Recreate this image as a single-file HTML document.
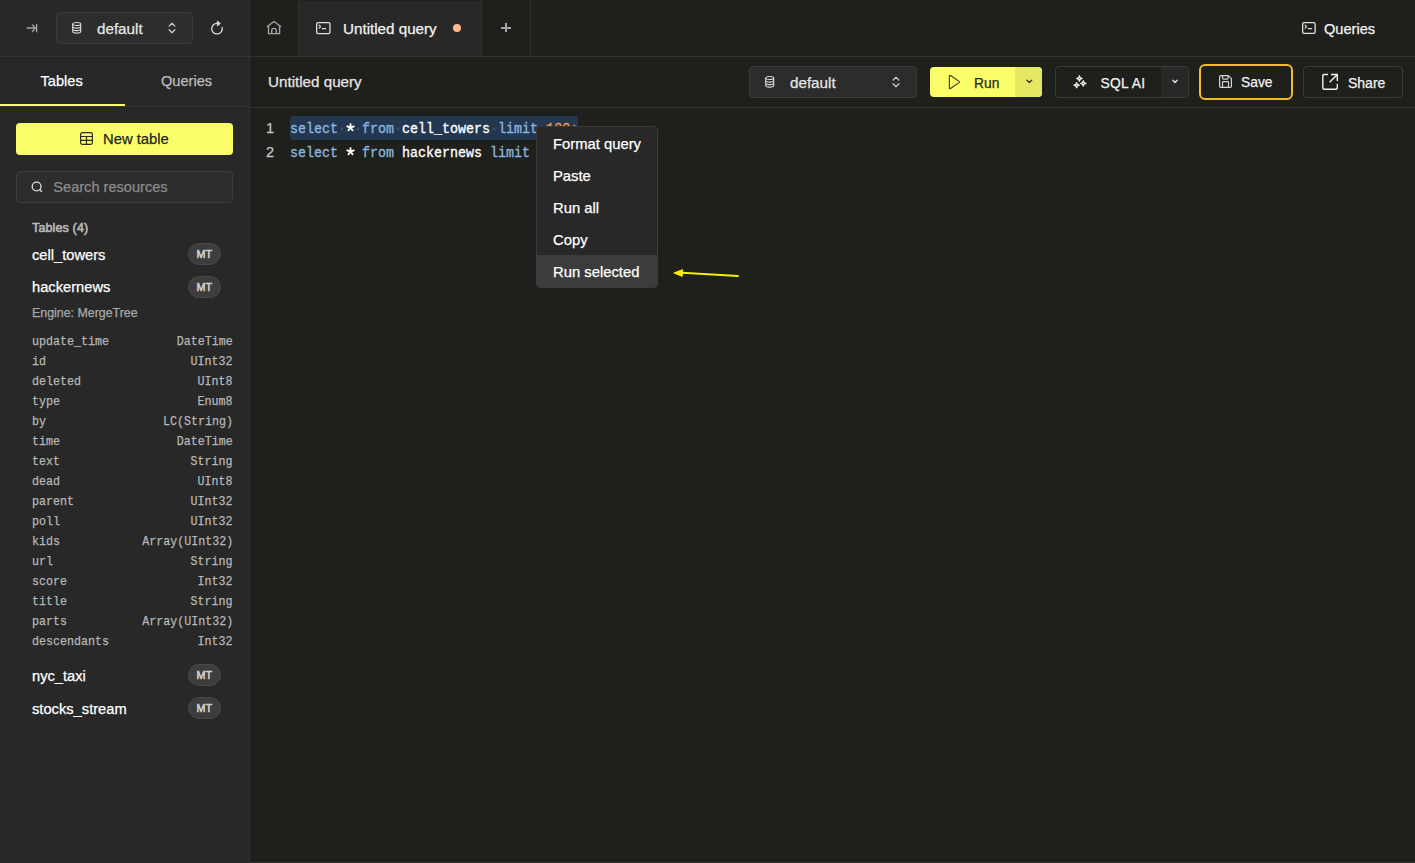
<!DOCTYPE html>
<html><head><meta charset="utf-8">
<style>
*{box-sizing:border-box;margin:0;padding:0}
html,body{width:1415px;height:863px;overflow:hidden;background:#1f1f1c;font-family:"Liberation Sans",sans-serif;color:#fff}
.a{position:absolute}
.t{position:absolute;line-height:1;white-space:nowrap;-webkit-text-stroke:0.25px currentColor}
.m{font-family:"Liberation Mono",monospace}
svg{position:absolute;overflow:visible}
</style></head><body>

<!-- sidebar -->
<div class="a" style="left:0;top:0;width:249px;height:863px;background:#282828"></div>
<div class="a" style="left:249px;top:0;width:1px;height:863px;background:#323232"></div>
<div class="a" style="left:0;top:56px;width:1415px;height:1px;background:#323232"></div>
<div class="a" style="left:0;top:106px;width:249px;height:1px;background:#323232"></div>
<div class="a" style="left:250px;top:107px;width:1165px;height:1px;background:#323232"></div>
<div class="a" style="left:250px;top:862px;width:1165px;height:1px;background:#353535"></div>
<div class="a" style="left:0;top:104px;width:125px;height:2px;background:#faff69"></div>

<!-- top-left controls -->
<svg style="left:22px;top:18px" width="20" height="20" viewBox="0 0 20 20"><path d="M5.2 10h7.6M10.4 6.9L13.3 10 10.4 13.6" stroke="#a4a6aa" stroke-width="1.35" fill="none" stroke-linecap="round" stroke-linejoin="round"/><path d="M14.6 6.4v7.4" stroke="#a4a6aa" stroke-width="1.35" fill="none" stroke-linecap="round"/></svg>
<div class="a" style="left:56px;top:12px;width:137px;height:32px;border:1px solid #3a3a3a;border-radius:4px;background:#2d2d2d"></div>
<svg style="left:72.3px;top:21.6px" width="10" height="12" viewBox="0 0 10 12"><ellipse cx="4.7" cy="2" rx="4" ry="1.45" stroke="#ddd" stroke-width="1.1" fill="none"/><path d="M0.7 2v7.6c0 .8 1.8 1.5 4 1.5s4-.7 4-1.5V2M0.7 4.6c0 .8 1.8 1.5 4 1.5s4-.7 4-1.5M0.7 7.1c0 .8 1.8 1.5 4 1.5s4-.7 4-1.5" stroke="#ddd" stroke-width="1.1" fill="none"/></svg>
<div class="t" style="left:97px;top:21.3px;font-size:15.2px;color:#e6e6e6">default</div>
<svg style="left:168px;top:22px" width="8" height="12" viewBox="0 0 8 12"><path d="M1.1 4.1L4 1.3 6.9 4.1M1.1 7.8L4 10.7 6.9 7.8" stroke="#d0d0d0" stroke-width="1.25" fill="none" stroke-linecap="round" stroke-linejoin="round"/></svg>
<svg style="left:0;top:0" width="250" height="56"><path d="M222.1 27.3A5.3 5.3 0 1 1 217.6 23.4" stroke="#ddd" stroke-width="1.3" fill="none" stroke-linecap="round"/><path d="M217.3 21L220.4 23.6 217.3 26z" fill="#ddd" stroke="#ddd" stroke-width="0.8" stroke-linejoin="round"/></svg>

<!-- tabs -->
<div class="a" style="left:298px;top:0;width:1px;height:56px;background:#323232"></div>
<div class="a" style="left:299px;top:1px;width:182px;height:55px;background:#282828"></div>
<div class="a" style="left:481px;top:0;width:1px;height:56px;background:#323232"></div>
<div class="a" style="left:530px;top:0;width:1px;height:56px;background:#323232"></div>
<svg style="left:262px;top:16px" width="24" height="24" viewBox="0 0 24 24"><path d="M5.4 10.6L12 5.6 18.6 10.6" stroke="#a4a6aa" stroke-width="1.3" fill="none" stroke-linecap="round" stroke-linejoin="round"/><path d="M6.5 9.8V17.6H17.6V9.8" stroke="#a4a6aa" stroke-width="1.3" fill="none" stroke-linejoin="round"/><path d="M9.7 17.6V14.6a2.3 2.3 0 0 1 4.6 0V17.6" stroke="#a4a6aa" stroke-width="1.3" fill="none"/></svg>
<svg style="left:315.8px;top:22px" width="15" height="12" viewBox="0 0 15 12"><rect x="0.65" y="0.65" width="13.3" height="10.9" rx="1.4" stroke="#e0e0e0" stroke-width="1.3" fill="none"/><path d="M3.1 3.1l1.5 1.5-1.5 1.5M6.3 6.6h3.4" stroke="#e0e0e0" stroke-width="1.2" fill="none" stroke-linecap="round" stroke-linejoin="round"/></svg>
<div class="t" style="left:343px;top:21.4px;font-size:15.2px;color:#f2f2f2">Untitled query</div>
<div class="a" style="left:452.8px;top:23.7px;width:8.4px;height:8.4px;border-radius:50%;background:#ffb88c"></div>
<div class="a" style="left:505.1px;top:22.8px;width:1.5px;height:9.4px;background:#a4a6aa"></div><div class="a" style="left:501.1px;top:27.1px;width:9.6px;height:1.5px;background:#a4a6aa"></div>

<!-- top right Queries -->
<svg style="left:1302px;top:22px" width="15" height="12" viewBox="0 0 15 12"><rect x="0.65" y="0.65" width="12.5" height="10.7" rx="1.4" stroke="#e0e0e0" stroke-width="1.3" fill="none"/><path d="M3.1 3.1l1.5 1.5-1.5 1.5M6.3 6.6h3.4" stroke="#e0e0e0" stroke-width="1.2" fill="none" stroke-linecap="round" stroke-linejoin="round"/></svg>
<div class="t" style="left:1324px;top:22px;font-size:14.6px;color:#f2f2f2">Queries</div>

<!-- sidebar tabs -->
<div class="t" style="left:40.5px;top:73.8px;font-size:14.6px;color:#fff">Tables</div>
<div class="t" style="left:161px;top:73.8px;font-size:14.6px;color:#bdbdbd">Queries</div>

<!-- new table -->
<div class="a" style="left:16px;top:123px;width:217px;height:32px;border-radius:4px;background:#faff69"></div>
<svg style="left:80px;top:132px" width="13" height="13" viewBox="0 0 13 13"><rect x="0.6" y="0.6" width="11.8" height="11.8" rx="1.8" stroke="#2a2a1a" stroke-width="1.2" fill="none"/><path d="M0.6 4.5h11.8M0.6 8.4h11.8M6.5 4.5v7.9" stroke="#2a2a1a" stroke-width="1.2"/></svg>
<div class="t" style="left:103px;top:131.8px;font-size:14.8px;color:#1f1f1c">New table</div>

<!-- search -->
<div class="a" style="left:16px;top:171px;width:217px;height:32px;border:1px solid #3d3d3d;border-radius:4px;background:#2d2d2d"></div>
<svg style="left:31px;top:181px" width="12" height="12" viewBox="0 0 12 12"><circle cx="5.6" cy="5.5" r="4.4" stroke="#dcdcdc" stroke-width="1.35" fill="none"/><path d="M8.9 8.8l1.7 1.7" stroke="#dcdcdc" stroke-width="1.35" stroke-linecap="round"/></svg>
<div class="t" style="left:53.3px;top:180px;font-size:14.6px;color:#8c8c8c">Search resources</div>

<!-- table list -->
<div class="t" style="left:32px;top:222.2px;font-size:12.6px;color:#b8b8b8;-webkit-text-stroke:0.6px currentColor;letter-spacing:0.1px">Tables (4)</div>
<div class="t" style="left:32px;top:247.5px;font-size:14.7px;color:#fff">cell_towers</div>
<div class="a" style="left:188px;top:243px;width:33px;height:22px;border-radius:11px;background:#3d3d3d;border:1px solid #484848"></div>
<div class="t" style="left:196.4px;top:249.3px;font-size:10.8px;color:#d0d0d0;-webkit-text-stroke:0.55px currentColor;letter-spacing:0.2px">MT</div>
<div class="t" style="left:32px;top:280.2px;font-size:14.7px;color:#fff">hackernews</div>
<div class="a" style="left:188px;top:276px;width:33px;height:22px;border-radius:11px;background:#3d3d3d;border:1px solid #484848"></div>
<div class="t" style="left:196.4px;top:282.3px;font-size:10.8px;color:#d0d0d0;-webkit-text-stroke:0.55px currentColor;letter-spacing:0.2px">MT</div>
<div class="t" style="left:32px;top:306.6px;font-size:12.4px;color:#a8a8a8">Engine: MergeTree</div>

<div class="t m" style="left:32px;top:334.86px;font-size:13.5px;color:#b8b8b8;transform:scaleX(0.8642);transform-origin:0 0">update_time</div>
<div class="t m" style="right:1182px;top:334.86px;font-size:13.5px;color:#b8b8b8;transform:scaleX(0.8642);transform-origin:100% 0">DateTime</div>
<div class="t m" style="left:32px;top:354.86px;font-size:13.5px;color:#b8b8b8;transform:scaleX(0.8642);transform-origin:0 0">id</div>
<div class="t m" style="right:1182px;top:354.86px;font-size:13.5px;color:#b8b8b8;transform:scaleX(0.8642);transform-origin:100% 0">UInt32</div>
<div class="t m" style="left:32px;top:374.86px;font-size:13.5px;color:#b8b8b8;transform:scaleX(0.8642);transform-origin:0 0">deleted</div>
<div class="t m" style="right:1182px;top:374.86px;font-size:13.5px;color:#b8b8b8;transform:scaleX(0.8642);transform-origin:100% 0">UInt8</div>
<div class="t m" style="left:32px;top:394.86px;font-size:13.5px;color:#b8b8b8;transform:scaleX(0.8642);transform-origin:0 0">type</div>
<div class="t m" style="right:1182px;top:394.86px;font-size:13.5px;color:#b8b8b8;transform:scaleX(0.8642);transform-origin:100% 0">Enum8</div>
<div class="t m" style="left:32px;top:414.86px;font-size:13.5px;color:#b8b8b8;transform:scaleX(0.8642);transform-origin:0 0">by</div>
<div class="t m" style="right:1182px;top:414.86px;font-size:13.5px;color:#b8b8b8;transform:scaleX(0.8642);transform-origin:100% 0">LC(String)</div>
<div class="t m" style="left:32px;top:434.86px;font-size:13.5px;color:#b8b8b8;transform:scaleX(0.8642);transform-origin:0 0">time</div>
<div class="t m" style="right:1182px;top:434.86px;font-size:13.5px;color:#b8b8b8;transform:scaleX(0.8642);transform-origin:100% 0">DateTime</div>
<div class="t m" style="left:32px;top:454.86px;font-size:13.5px;color:#b8b8b8;transform:scaleX(0.8642);transform-origin:0 0">text</div>
<div class="t m" style="right:1182px;top:454.86px;font-size:13.5px;color:#b8b8b8;transform:scaleX(0.8642);transform-origin:100% 0">String</div>
<div class="t m" style="left:32px;top:474.86px;font-size:13.5px;color:#b8b8b8;transform:scaleX(0.8642);transform-origin:0 0">dead</div>
<div class="t m" style="right:1182px;top:474.86px;font-size:13.5px;color:#b8b8b8;transform:scaleX(0.8642);transform-origin:100% 0">UInt8</div>
<div class="t m" style="left:32px;top:494.86px;font-size:13.5px;color:#b8b8b8;transform:scaleX(0.8642);transform-origin:0 0">parent</div>
<div class="t m" style="right:1182px;top:494.86px;font-size:13.5px;color:#b8b8b8;transform:scaleX(0.8642);transform-origin:100% 0">UInt32</div>
<div class="t m" style="left:32px;top:514.86px;font-size:13.5px;color:#b8b8b8;transform:scaleX(0.8642);transform-origin:0 0">poll</div>
<div class="t m" style="right:1182px;top:514.86px;font-size:13.5px;color:#b8b8b8;transform:scaleX(0.8642);transform-origin:100% 0">UInt32</div>
<div class="t m" style="left:32px;top:534.86px;font-size:13.5px;color:#b8b8b8;transform:scaleX(0.8642);transform-origin:0 0">kids</div>
<div class="t m" style="right:1182px;top:534.86px;font-size:13.5px;color:#b8b8b8;transform:scaleX(0.8642);transform-origin:100% 0">Array(UInt32)</div>
<div class="t m" style="left:32px;top:554.86px;font-size:13.5px;color:#b8b8b8;transform:scaleX(0.8642);transform-origin:0 0">url</div>
<div class="t m" style="right:1182px;top:554.86px;font-size:13.5px;color:#b8b8b8;transform:scaleX(0.8642);transform-origin:100% 0">String</div>
<div class="t m" style="left:32px;top:574.86px;font-size:13.5px;color:#b8b8b8;transform:scaleX(0.8642);transform-origin:0 0">score</div>
<div class="t m" style="right:1182px;top:574.86px;font-size:13.5px;color:#b8b8b8;transform:scaleX(0.8642);transform-origin:100% 0">Int32</div>
<div class="t m" style="left:32px;top:594.86px;font-size:13.5px;color:#b8b8b8;transform:scaleX(0.8642);transform-origin:0 0">title</div>
<div class="t m" style="right:1182px;top:594.86px;font-size:13.5px;color:#b8b8b8;transform:scaleX(0.8642);transform-origin:100% 0">String</div>
<div class="t m" style="left:32px;top:614.86px;font-size:13.5px;color:#b8b8b8;transform:scaleX(0.8642);transform-origin:0 0">parts</div>
<div class="t m" style="right:1182px;top:614.86px;font-size:13.5px;color:#b8b8b8;transform:scaleX(0.8642);transform-origin:100% 0">Array(UInt32)</div>
<div class="t m" style="left:32px;top:634.86px;font-size:13.5px;color:#b8b8b8;transform:scaleX(0.8642);transform-origin:0 0">descendants</div>
<div class="t m" style="right:1182px;top:634.86px;font-size:13.5px;color:#b8b8b8;transform:scaleX(0.8642);transform-origin:100% 0">Int32</div>

<div class="t" style="left:32px;top:668.5px;font-size:14.7px;color:#fff">nyc_taxi</div>
<div class="a" style="left:188px;top:664px;width:33px;height:22px;border-radius:11px;background:#3d3d3d;border:1px solid #484848"></div>
<div class="t" style="left:196.4px;top:670.3px;font-size:10.8px;color:#d0d0d0;-webkit-text-stroke:0.55px currentColor;letter-spacing:0.2px">MT</div>
<div class="t" style="left:32px;top:701.5px;font-size:14.7px;color:#fff">stocks_stream</div>
<div class="a" style="left:188px;top:697px;width:33px;height:22px;border-radius:11px;background:#3d3d3d;border:1px solid #484848"></div>
<div class="t" style="left:196.4px;top:703.3px;font-size:10.8px;color:#d0d0d0;-webkit-text-stroke:0.55px currentColor;letter-spacing:0.2px">MT</div>

<!-- editor header -->
<div class="t" style="left:268px;top:73.9px;font-size:15.2px;color:#e6e6e6">Untitled query</div>

<div class="a" style="left:749px;top:66px;width:168px;height:32px;border:1px solid #3a3a3a;border-radius:4px;background:#2c2c2c"></div>
<svg style="left:765px;top:75.8px" width="10" height="12" viewBox="0 0 10 12"><ellipse cx="4.7" cy="2" rx="4" ry="1.45" stroke="#ddd" stroke-width="1.1" fill="none"/><path d="M0.7 2v7.6c0 .8 1.8 1.5 4 1.5s4-.7 4-1.5V2M0.7 4.6c0 .8 1.8 1.5 4 1.5s4-.7 4-1.5M0.7 7.1c0 .8 1.8 1.5 4 1.5s4-.7 4-1.5" stroke="#ddd" stroke-width="1.1" fill="none"/></svg>
<div class="t" style="left:790px;top:75.1px;font-size:15.2px;color:#e6e6e6">default</div>
<svg style="left:892.2px;top:76px" width="8" height="12" viewBox="0 0 8 12"><path d="M1.1 4.1L4 1.3 6.9 4.1M1.1 7.8L4 10.7 6.9 7.8" stroke="#d0d0d0" stroke-width="1.25" fill="none" stroke-linecap="round" stroke-linejoin="round"/></svg>

<div class="a" style="left:930px;top:67px;width:112px;height:30px;border-radius:4px;background:#faff69;overflow:hidden"><div class="a" style="left:85px;top:0;width:27px;height:30px;background:#e5e862"></div></div>
<svg style="left:948px;top:74px" width="13" height="16" viewBox="0 0 13 16"><path d="M1.4 2.1v11.8c0 .6.6.9 1.1.6l8.6-5.9c.4-.3.4-.9 0-1.2L2.5 1.5c-.5-.3-1.1 0-1.1.6z" stroke="#34342a" stroke-width="1.1" fill="none" stroke-linejoin="round"/></svg>
<div class="t" style="left:974px;top:77px;font-size:13.8px;color:#2a2a22">Run</div>
<svg style="left:1025.6px;top:79.3px" width="7" height="5" viewBox="0 0 7 5"><path d="M0.9 1.3L3.3 3.6 5.7 1.3" stroke="#3a3a28" stroke-width="1.4" fill="none" stroke-linecap="round" stroke-linejoin="round"/></svg>

<div class="a" style="left:1055px;top:66px;width:134px;height:32px;border:1px solid #3c3c3c;border-radius:4px;overflow:hidden"><div class="a" style="left:105px;top:0;width:28px;height:30px;background:#282828"></div></div>
<svg style="left:0;top:0" width="1415" height="100"><path d="M1079.40 75.40Q1079.71 78.19 1082.50 78.50Q1079.71 78.81 1079.40 81.60Q1079.09 78.81 1076.30 78.50Q1079.09 78.19 1079.40 75.40zM1083.30 80.40Q1083.60 83.10 1086.30 83.40Q1083.60 83.70 1083.30 86.40Q1083.00 83.70 1080.30 83.40Q1083.00 83.10 1083.30 80.40zM1076.60 82.20Q1076.90 84.90 1079.60 85.20Q1076.90 85.50 1076.60 88.20Q1076.30 85.50 1073.60 85.20Q1076.30 84.90 1076.60 82.20z" fill="#f0f0f0" stroke="#f0f0f0" stroke-width="1" stroke-linejoin="round"/><circle cx="1079.4" cy="78.5" r="0.5" fill="#1f1f1c"/><circle cx="1083.3" cy="83.4" r="0.5" fill="#1f1f1c"/><circle cx="1076.6" cy="85.2" r="0.5" fill="#1f1f1c"/></svg>
<div class="t" style="left:1100.6px;top:77.1px;font-size:13.8px;color:#f2f2f2;letter-spacing:0.25px">SQL AI</div>
<svg style="left:1172px;top:79.3px" width="7" height="5" viewBox="0 0 7 5"><path d="M0.9 1.3L3 3.5 5.1 1.3" stroke="#e0e0e0" stroke-width="1.4" fill="none" stroke-linecap="round" stroke-linejoin="round"/></svg>

<div class="a" style="left:1199px;top:64px;width:94px;height:36px;border:2px solid #f5b82e;border-radius:6px"></div>
<svg style="left:1219.2px;top:75px" width="13" height="13" viewBox="0 0 13 13"><path d="M1.8 0.6h7.6l3 3v7.6c0 .66-.54 1.2-1.2 1.2H1.8c-.66 0-1.2-.54-1.2-1.2V1.8c0-.66.54-1.2 1.2-1.2z" stroke="#d4d4d4" stroke-width="1.2" fill="none" stroke-linejoin="round"/><path d="M3.6 0.8v2.3c0 .6.4 1 1 1h3.4c.6 0 1-.4 1-1V0.8M3.5 12.2V7.2c0-.3.2-.5.5-.5h5c.3 0 .5.2.5.5v5" stroke="#d4d4d4" stroke-width="1.2" fill="none"/></svg>
<div class="t" style="left:1241px;top:75.5px;font-size:13.8px;color:#f2f2f2">Save</div>

<div class="a" style="left:1303px;top:66px;width:100px;height:32px;border:1px solid #3c3c3c;border-radius:4px"></div>
<svg style="left:1321px;top:73px" width="18" height="18" viewBox="0 0 18 18"><path d="M7 1.5H2.9c-.6 0-1.1.5-1.1 1.1v12.5c0 .6.5 1.1 1.1 1.1h12.3c.6 0 1.1-.5 1.1-1.1V10.9" stroke="#f0f0f0" stroke-width="1.4" fill="none"/><path d="M10 1.5h6.3v6.5M16.1 1.7L8.6 9.2" stroke="#f0f0f0" stroke-width="1.4" fill="none"/></svg>
<div class="t" style="left:1348px;top:76.1px;font-size:14px;color:#f2f2f2">Share</div>

<!-- editor -->
<div class="a" style="left:290px;top:116px;width:288px;height:24px;border-radius:3px;background:#233850"></div>
<div class="t" style="left:266px;top:121.02px;font-size:14.5px;color:#c8c8c8">1</div>
<div class="t" style="left:266px;top:145.02px;font-size:14.5px;color:#c8c8c8">2</div>
<div class="t m" style="left:290px;top:121.93px;font-size:15.5px;white-space:pre;transform:scaleX(0.8602);transform-origin:0 0;-webkit-text-stroke:0.35px currentColor"><span style="color:#8db6dd;-webkit-text-stroke:0.35px #8db6dd">select</span><span style="color:#44566c">·</span> <span style="color:#44566c">·</span><span style="color:#8db6dd;-webkit-text-stroke:0.35px #8db6dd">from</span><span style="color:#44566c">·</span><span style="color:#ffffff;-webkit-text-stroke:0.35px #ffffff">cell_towers</span><span style="color:#44566c">·</span><span style="color:#8db6dd;-webkit-text-stroke:0.35px #8db6dd">limit</span><span style="color:#44566c">·</span><span style="color:#f39c4a;-webkit-text-stroke:0.35px #f39c4a">100</span><span style="color:#c98a5c;-webkit-text-stroke:0.35px #c98a5c">;</span></div>
<div class="t m" style="left:290px;top:145.93px;font-size:15.5px;white-space:pre;transform:scaleX(0.8602);transform-origin:0 0;-webkit-text-stroke:0.35px currentColor"><span style="color:#8db6dd;-webkit-text-stroke:0.35px #8db6dd">select</span>   <span style="color:#8db6dd;-webkit-text-stroke:0.35px #8db6dd">from</span> <span style="color:#ffffff;-webkit-text-stroke:0.35px #ffffff">hackernews</span> <span style="color:#8db6dd;-webkit-text-stroke:0.35px #8db6dd">limit</span> <span style="color:#f39c4a;-webkit-text-stroke:0.35px #f39c4a">100</span><span style="color:#c98a5c;-webkit-text-stroke:0.35px #c98a5c">;</span></div>
<svg style="left:346px;top:123.00px" width="9" height="9" viewBox="-4.5 -4.5 9 9"><path d="M0 0V-3.4M0 0L3.25 -1.05M0 0L-3.25 -1.05M0 0L2 2.75M0 0L-2 2.75" stroke="#fff" stroke-width="1.9" stroke-linecap="round"/></svg>
<svg style="left:346px;top:147.00px" width="9" height="9" viewBox="-4.5 -4.5 9 9"><path d="M0 0V-3.4M0 0L3.25 -1.05M0 0L-3.25 -1.05M0 0L2 2.75M0 0L-2 2.75" stroke="#fff" stroke-width="1.9" stroke-linecap="round"/></svg>

<!-- context menu -->
<div class="a" style="left:536px;top:126px;width:122px;height:162px;border:1px solid #3a3a3a;border-radius:4px;background:#282828;overflow:hidden">
<div class="a" style="left:0;top:128px;width:120px;height:32px;background:#3c3c3c"></div>
</div>
<div class="t" style="left:553px;top:136.5px;font-size:14.8px;color:#fff">Format query</div>
<div class="t" style="left:553px;top:168.5px;font-size:14.8px;color:#fff">Paste</div>
<div class="t" style="left:553px;top:200.5px;font-size:14.8px;color:#fff">Run all</div>
<div class="t" style="left:553px;top:232.5px;font-size:14.8px;color:#fff">Copy</div>
<div class="t" style="left:553px;top:264.5px;font-size:14.8px;color:#fff">Run selected</div>

<!-- arrow -->
<svg style="left:0;top:0" width="1415" height="863"><path d="M682 272.7L738 276" stroke="#f2f200" stroke-width="1.9" stroke-linecap="round"/><path d="M673.8 273L682.6 269.6 682.3 276.4z" fill="#f2f200" stroke="#f2f200" stroke-width="0.9" stroke-linejoin="round"/></svg>

</body></html>
